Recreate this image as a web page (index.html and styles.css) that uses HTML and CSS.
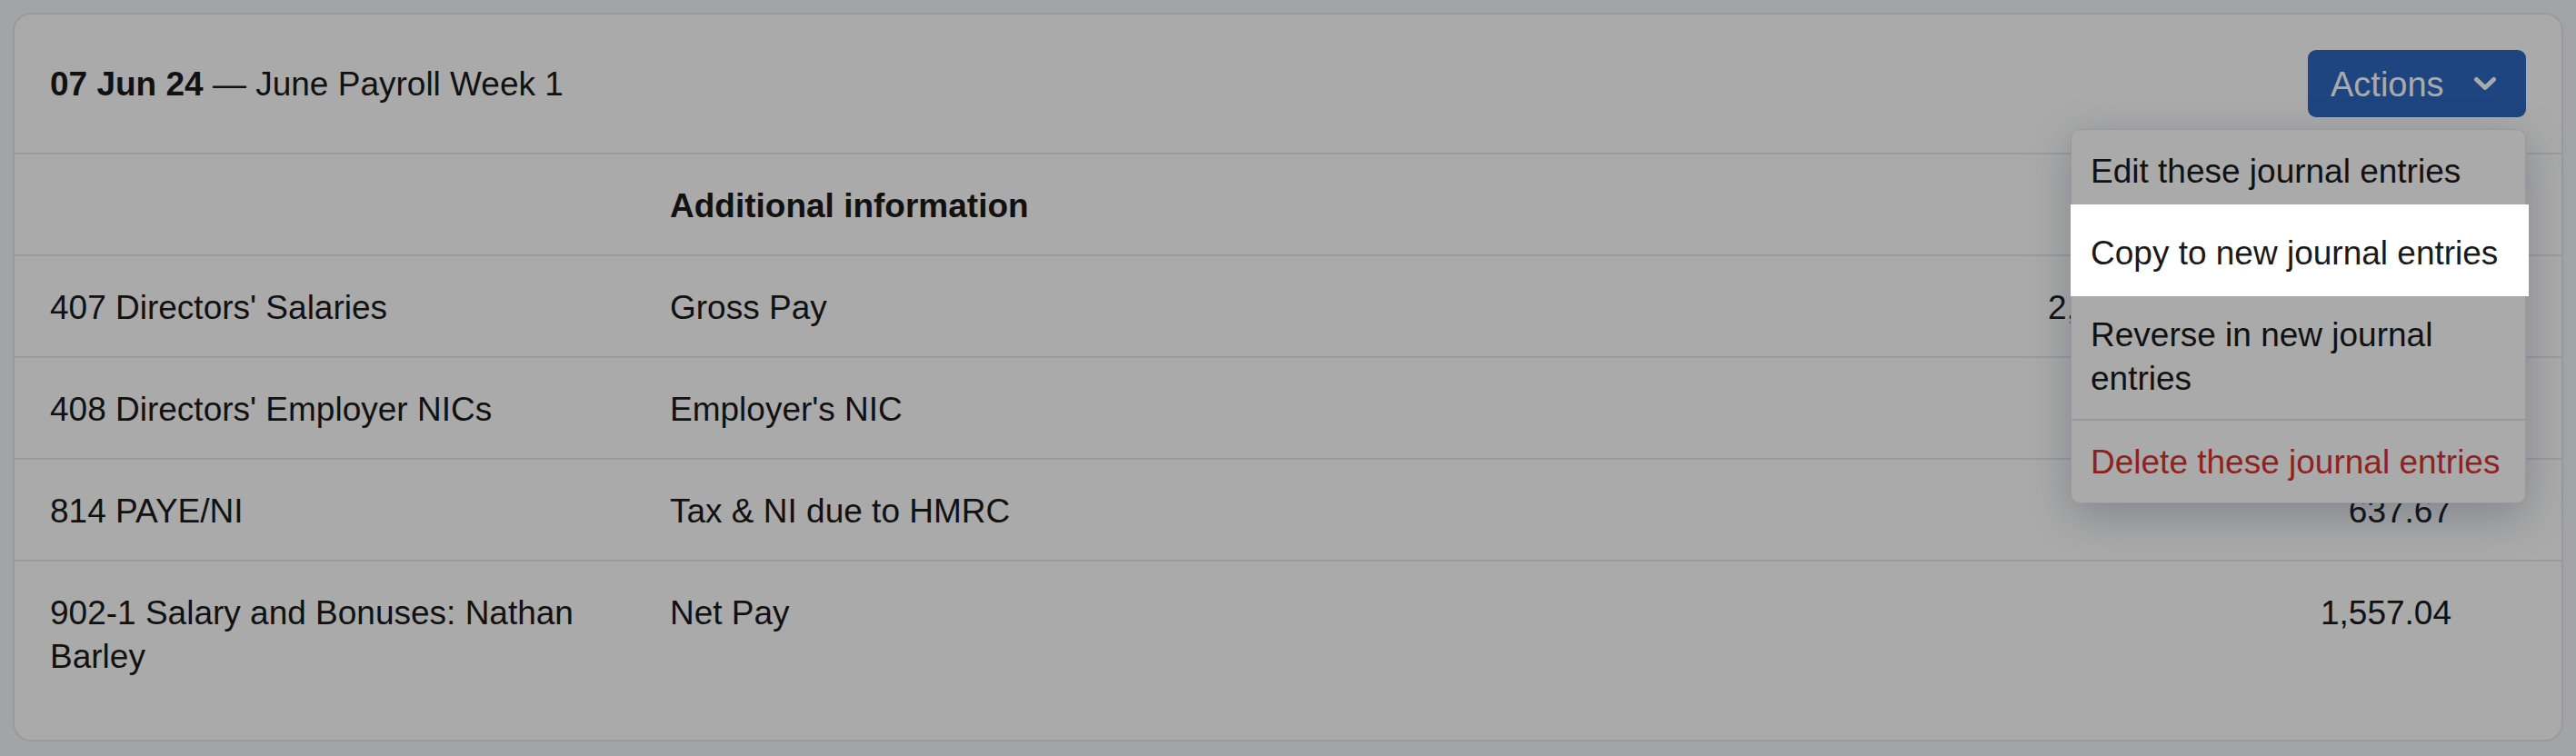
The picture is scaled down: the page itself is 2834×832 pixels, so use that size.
FILE: index.html
```html
<!DOCTYPE html>
<html lang="en">
<head>
<meta charset="utf-8">
<title>Journal entries</title>
<link rel="stylesheet" href="styles.css">
</head>
<body>
  <section class="card">
    <header class="card-header">
      <h2 class="title"><strong>07 Jun 24</strong> — June Payroll Week 1</h2>
      <div class="actions">
        <button class="btn" type="button">
          <span>Actions</span>
          <svg class="chev" width="26" height="16" viewBox="0 0 26 16" aria-hidden="true">
            <path d="M3.5 3.5 L13 12.5 L22.5 3.5" fill="none" stroke="currentColor" stroke-width="5" stroke-linecap="round" stroke-linejoin="round"/>
          </svg>
        </button>
        <ul class="menu">
          <li class="menu-item">Edit these journal entries</li>
          <li class="menu-item is-highlighted">Copy to new journal entries</li>
          <li class="menu-item">Reverse in new journal entries</li>
          <li class="menu-item danger">Delete these journal entries</li>
        </ul>
      </div>
    </header>
    <div class="table">
      <div class="row head">
        <div class="cell c-account"></div>
        <div class="cell">Additional information</div>
        <div class="cell num">Debit</div>
        <div class="cell num">Credit</div>
      </div>
      <div class="row">
        <div class="cell c-account">407 Directors' Salaries</div>
        <div class="cell">Gross Pay</div>
        <div class="cell num">2,000.00</div>
        <div class="cell num"></div>
      </div>
      <div class="row">
        <div class="cell c-account">408 Directors' Employer NICs</div>
        <div class="cell">Employer's NIC</div>
        <div class="cell num">194.71</div>
        <div class="cell num"></div>
      </div>
      <div class="row">
        <div class="cell c-account">814 PAYE/NI</div>
        <div class="cell">Tax &amp; NI due to HMRC</div>
        <div class="cell num"></div>
        <div class="cell num">637.67</div>
      </div>
      <div class="row last">
        <div class="cell c-account">902-1 Salary and Bonuses: Nathan Barley</div>
        <div class="cell">Net Pay</div>
        <div class="cell num"></div>
        <div class="cell num">1,557.04</div>
      </div>
    </div>
  </section>
  <div class="overlay"></div>
</body>
</html>
```

FILE: styles.css
```css
* { box-sizing: border-box; }

html, body {
  margin: 0;
  height: 100%;
}

body {
  background: #f3f7fc;
  padding: 14px 14px 12px;
  font-family: "Liberation Sans", Arial, sans-serif;
  font-size: 37px;
  line-height: 48px;
  color: #1a1a1a;
}

.card {
  background: #ffffff;
  border: 2px solid #e4e7eb;
  border-radius: 20px;
  padding-bottom: 38px;
}

.card-header {
  display: flex;
  align-items: center;
  justify-content: space-between;
  padding: 39px 39px 39px 39px;
  border-bottom: 2px solid #e6e8eb;
}

.title {
  margin: 0;
  padding-top: 2px;
  font-size: 37px;
  font-weight: 400;
  line-height: 48px;
}

.title strong { font-weight: 700; }

.actions {
  position: relative;
}

.btn {
  display: flex;
  align-items: center;
  width: 240px;
  height: 74px;
  padding: 2px 0 0 25px;
  gap: 32px;
  background: #2e68c0;
  color: #ffffff;
  border: none;
  border-radius: 9px;
  font-family: inherit;
  font-size: 38px;
  line-height: 48px;
}

.chev { display: block; margin-top: -2px; }

.menu {
  position: absolute;
  top: 87px;
  right: 0;
  width: 501px;
  margin: 0;
  padding: 0;
  list-style: none;
  background: #ffffff;
  border: 1px solid #e3e5e9;
  border-radius: 10px;
  box-shadow: 0 14px 48px rgba(40, 60, 95, 0.28);
}

.menu-item {
  padding: 22px 12px 20px 21px;
  line-height: 48px;
}

.menu-item.is-highlighted {
  position: relative;
  z-index: 3;
  background: #ffffff;
  margin: -8px -4px -3px -1px;
  padding: 30px 16px 23px 22px;
}

.menu-item.danger {
  border-top: 2px solid #e6e8eb;
  color: #d73430;
}

.table { display: block; }

.row {
  display: grid;
  grid-template-columns: 682px 1fr 286px 300px;
  padding: 33px 121px 29px 39px;
  border-bottom: 2px solid #e6e8eb;
}

.row.last { border-bottom: none; }

.row.head { font-weight: 700; }

.cell.c-account { padding-right: 60px; }

.cell.num { text-align: right; }

.overlay {
  position: fixed;
  inset: 0;
  z-index: 2;
  background: rgba(0, 0, 0, 0.333);
}
```
